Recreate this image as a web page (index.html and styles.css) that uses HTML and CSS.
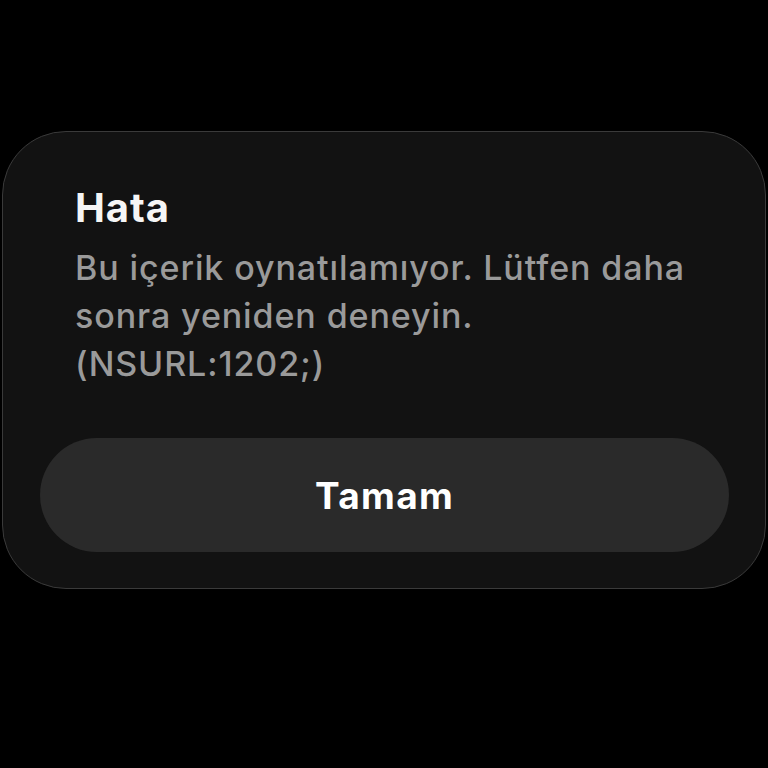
FILE: index.html
```html
<!DOCTYPE html>
<html lang="tr">

<head>
  <meta charset="UTF-8" />
  <meta name="viewport" content="width=device-width, initial-scale=1.0" />
  <title>Hata</title>
  <link rel="stylesheet" href="styles.css">
</head>

<body>
  <!-- Alert dialog -->
  <div class="alert">
    <div class="alert-text">
      <h1 class="alert-title">Hata</h1>
      <p class="alert-message">Bu içerik oynatılamıyor. Lütfen daha sonra yeniden deneyin.<br>(NSURL:1202;)</p>
    </div>
    <button class="alert-button">Tamam</button>
  </div>
</body>

</html>
```

FILE: styles.css
```css
body {
  font-family: "Inter", "Noto Sans", sans-serif;
  background-color: #000;
  margin: 0;
  padding: 131px 2px 0 2px;
  color: white;
}

/* Alert card */
.alert {
  box-sizing: border-box;
  width: 764px;
  height: 458px;
  background-color: #121212;
  border: 1px solid #3a3a3a;
  border-radius: 64px;
  padding: 0 36px 36px 37px;
  display: flex;
  flex-direction: column;
}

.alert-text {
  padding: 52px 10px 0 35px;
  flex: 1;
}

.alert-title {
  margin: 0;
  font-size: 40px;
  font-weight: 700;
  letter-spacing: 0.9px;
  line-height: 48px;
  color: #f5f5f5;
}

.alert-message {
  margin: 12px 0 0 0;
  font-size: 34px;
  font-weight: 500;
  letter-spacing: 0.9px;
  line-height: 48px;
  color: #9a9a9a;
}

.alert-button {
  height: 114px;
  border: none;
  border-radius: 57px;
  background-color: #2a2a2a;
  color: #fff;
  font-family: inherit;
  font-size: 37px;
  font-weight: 700;
  letter-spacing: 1.3px;
  cursor: pointer;
}
```
